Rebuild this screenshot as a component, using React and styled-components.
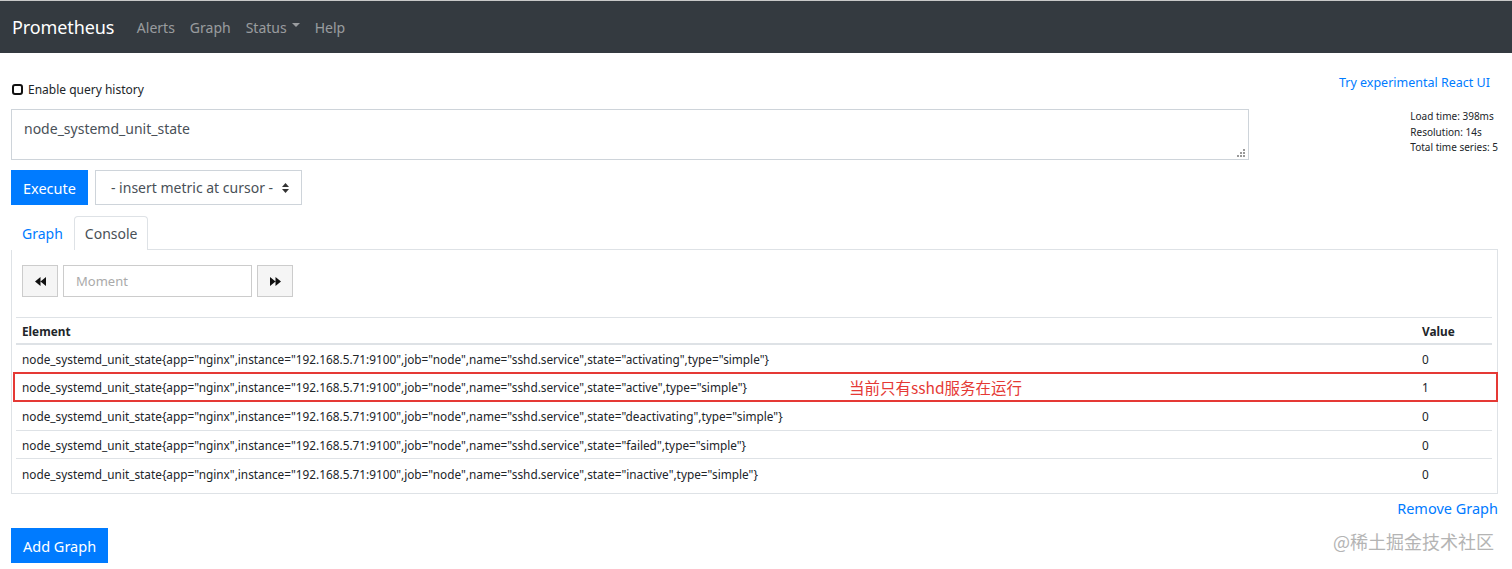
import React from "react";
import styled, { createGlobalStyle } from "styled-components";

const GlobalStyle = createGlobalStyle`
  html, body {
    margin: 0;
    padding: 0;
    background: #fff;
    font-family: "Noto Sans", "Open Sans", "Noto Sans CJK SC", sans-serif;
    color: #212529;
  }
`;

const rows = [
  { state: "activating", value: "0" },
  { state: "active", value: "1", note: "当前只有sshd服务在运行" },
  { state: "deactivating", value: "0" },
  { state: "failed", value: "0" },
  { state: "inactive", value: "0" },
];

const label = (state) =>
  `node_systemd_unit_state{app="nginx",instance="192.168.5.71:9100",job="node",name="sshd.service",state="${state}",type="simple"}`;

function Rewind() {
  return (
    <svg width="11" height="9" viewBox="0 0 11 9">
      <path d="M5.5 0 L0 4.5 L5.5 9 Z M11 0 L5.5 4.5 L11 9 Z" fill="#111" />
    </svg>
  );
}

function Forward() {
  return (
    <svg width="11" height="9" viewBox="0 0 11 9">
      <path d="M0 0 L5.5 4.5 L0 9 Z M5.5 0 L11 4.5 L5.5 9 Z" fill="#111" />
    </svg>
  );
}

function UpDown() {
  return (
    <svg width="7" height="10" viewBox="0 0 7 10">
      <path d="M3.5 0 L7 4 L0 4 Z M0 6 L7 6 L3.5 10 Z" fill="#333" />
    </svg>
  );
}

function Grip() {
  return (
    <svg width="8" height="8" viewBox="0 0 8 8">
      <g fill="#999">
        <rect x="6" y="0" width="2" height="2" />
        <rect x="3" y="3" width="2" height="2" />
        <rect x="6" y="3" width="2" height="2" />
        <rect x="0" y="6" width="2" height="2" />
        <rect x="3" y="6" width="2" height="2" />
        <rect x="6" y="6" width="2" height="2" />
      </g>
    </svg>
  );
}

export default function App() {
  return (
    <Page>
      <GlobalStyle />
      <NavBar>
        <Brand>Prometheus</Brand>
        <NavLink>Alerts</NavLink>
        <NavLink>Graph</NavLink>
        <NavLink>
          Status <Caret />
        </NavLink>
        <NavLink>Help</NavLink>
      </NavBar>

      <Main>
        <TopRow>
          <QueryColumn>
            <HistoryRow>
              <CheckBox />
              Enable query history
            </HistoryRow>
            <Expression>
              node_systemd_unit_state
              <GripSpot>
                <Grip />
              </GripSpot>
            </Expression>
            <Controls>
              <PrimaryButton>Execute</PrimaryButton>
              <MetricSelect>
                - insert metric at cursor -
                <UpDown />
              </MetricSelect>
            </Controls>
          </QueryColumn>
          <InfoColumn>
            <ReactLink>Try experimental React UI</ReactLink>
            <Stats>
              <div>Load time: 398ms</div>
              <div>Resolution: 14s</div>
              <div>Total time series: 5</div>
            </Stats>
          </InfoColumn>
        </TopRow>

        <Tabs>
          <Tab>Graph</Tab>
          <Tab $active>Console</Tab>
        </Tabs>
        <Panel>
          <TimeRow>
            <StepButton>
              <Rewind />
            </StepButton>
            <MomentInput>Moment</MomentInput>
            <StepButton>
              <Forward />
            </StepButton>
          </TimeRow>
          <Table>
            <HeadRow>
              <HeadCell>Element</HeadCell>
              <HeadCell />
              <HeadCell>Value</HeadCell>
            </HeadRow>
            {rows.map((r) => (
              <Row key={r.state} $marked={!!r.note}>
                <Cell>{label(r.state)}</Cell>
                <Note>{r.note}</Note>
                <Cell>{r.value}</Cell>
              </Row>
            ))}
          </Table>
        </Panel>

        <RemoveRow>
          <TextLink>Remove Graph</TextLink>
        </RemoveRow>
        <PrimaryButton>Add Graph</PrimaryButton>
      </Main>
      <Watermark>@稀土掘金技术社区</Watermark>
    </Page>
  );
}

const Page = styled.div`
  position: relative;
  width: 1512px;
  height: 569px;
  overflow: hidden;
`;

const NavBar = styled.nav`
  height: 52px;
  border-top: 1px solid #c8c8c8;
  background: #343a40;
  display: flex;
  align-items: center;
  padding: 0 12px;
`;

const Brand = styled.div`
  color: #fff;
  font-size: 18px;
  margin-right: 15px;
  letter-spacing: -0.1px;
`;

const NavLink = styled.div`
  color: rgba(255, 255, 255, 0.5);
  font-size: 14px;
  padding: 0 7.5px;
  display: flex;
  align-items: center;
  gap: 5px;
`;

const Caret = styled.span`
  width: 0;
  height: 0;
  border-left: 4px solid transparent;
  border-right: 4px solid transparent;
  border-top: 4px solid rgba(255, 255, 255, 0.5);
  margin-bottom: 5px;
`;

const Main = styled.div`
  padding: 0 14px 0 11px;
`;

const TopRow = styled.div`
  display: flex;
`;

const QueryColumn = styled.div`
  width: 1238px;
  padding-top: 27px;
`;

const HistoryRow = styled.label`
  display: flex;
  align-items: center;
  gap: 5px;
  height: 18px;
  font-size: 12px;
  padding-left: 1px;
`;

const CheckBox = styled.span`
  width: 7px;
  height: 7px;
  border: 2px solid #111;
  border-radius: 3px;
`;

const Expression = styled.div`
  position: relative;
  margin-top: 11px;
  height: 49px;
  border: 1px solid #ced4da;
  padding: 0 12px;
  font-size: 14px;
  line-height: 37px;
  color: #495057;
`;

const GripSpot = styled.span`
  position: absolute;
  right: 3px;
  bottom: 2px;
  line-height: 0;
`;

const Controls = styled.div`
  display: flex;
  gap: 7px;
  margin-top: 10px;
`;

const PrimaryButton = styled.div`
  display: inline-flex;
  align-items: center;
  justify-content: center;
  height: 35px;
  padding: 0 12px;
  background: #007bff;
  color: #fff;
  font-size: 14.5px;
  box-sizing: border-box;
`;

const MetricSelect = styled.div`
  display: flex;
  align-items: center;
  justify-content: space-between;
  width: 207px;
  height: 35px;
  box-sizing: border-box;
  border: 1px solid #ced4da;
  padding: 0 12px 0 15px;
  font-size: 14px;
  white-space: nowrap;
  color: #495057;
`;

const InfoColumn = styled.div`
  flex: 1;
  display: flex;
  flex-direction: column;
  align-items: flex-end;
  padding-top: 21px;
`;

const ReactLink = styled.div`
  font-size: 12.5px;
  color: #007bff;
  margin-right: 8px;
`;

const Stats = styled.div`
  margin-top: 18px;
  font-size: 10px;
  line-height: 15.5px;
`;

const Tabs = styled.div`
  display: flex;
  margin-top: 11px;
  height: 33px;
`;

const Tab = styled.div`
  display: flex;
  align-items: center;
  padding: 0 10px;
  font-size: 14px;
  color: ${(p) => (p.$active ? "#495057" : "#007bff")};
  border: 1px solid ${(p) => (p.$active ? "#dee2e6" : "transparent")};
  border-bottom: 0;
  border-radius: 4px 4px 0 0;
  background: #fff;
  position: relative;
  z-index: 1;
  margin-bottom: -1px;
`;

const Panel = styled.div`
  border: 1px solid #dee2e6;
  height: 245px;
  box-sizing: border-box;
  padding: 15px 5px 0 4px;
`;

const TimeRow = styled.div`
  display: flex;
  gap: 5px;
  padding-left: 6px;
  height: 32px;
`;

const StepButton = styled.div`
  width: 36px;
  height: 32px;
  box-sizing: border-box;
  border: 1px solid #ccc;
  background: #f5f5f5;
  display: flex;
  align-items: center;
  justify-content: center;
`;

const MomentInput = styled.div`
  width: 189px;
  height: 32px;
  box-sizing: border-box;
  border: 1px solid #ccc;
  padding: 0 12px;
  display: flex;
  align-items: center;
  font-size: 13px;
  color: #aaa;
`;

const Table = styled.div`
  margin-top: 20px;
  font-size: 11.8px;
`;

const HeadRow = styled.div`
  display: grid;
  grid-template-columns: 833px 1fr 76px;
  height: 25px;
  border-top: 1px solid #dee2e6;
  border-bottom: 2px solid #dee2e6;
  align-items: center;
`;

const HeadCell = styled.div`
  font-weight: 700;
  padding: 0 6px;
`;

const Row = styled.div`
  position: relative;
  display: grid;
  grid-template-columns: 833px 1fr 76px;
  height: 28.6px;
  box-sizing: border-box;
  border-bottom: 1px solid #dee2e6;
  align-items: center;
  &:last-child {
    border-bottom: 0;
  }
  ${(p) =>
    p.$marked &&
    `
    &::after {
      content: "";
      position: absolute;
      left: -3px;
      right: -6px;
      top: -2px;
      bottom: -1px;
      border: 2px solid #e53935;
      pointer-events: none;
    }
  `}
`;

const Cell = styled.div`
  padding: 0 6px;
  white-space: nowrap;
`;

const Note = styled.div`
  color: #e53935;
  font-size: 15.5px;
  font-family: "Noto Sans CJK SC", sans-serif;
`;

const RemoveRow = styled.div`
  display: flex;
  justify-content: flex-end;
  height: 28px;
  align-items: center;
  margin-top: 0;
  margin-bottom: 6px;
`;

const TextLink = styled.div`
  color: #007bff;
  font-size: 14.5px;
`;

const Watermark = styled.div`
  position: absolute;
  right: 18px;
  top: 528px;
  font-size: 18px;
  color: #b4b4b4;
  font-family: "Noto Sans CJK SC", sans-serif;
`;
